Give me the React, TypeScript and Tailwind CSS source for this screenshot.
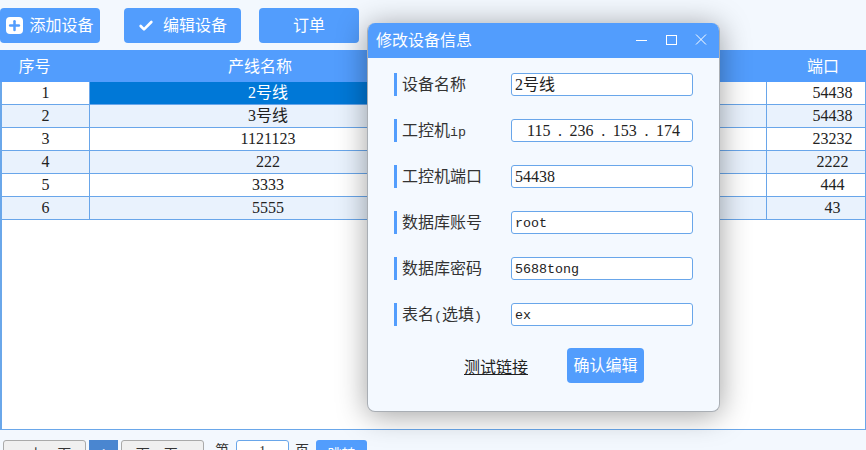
import type { ReactNode } from "react";
import { Check, Plus } from "lucide-react";

const rows = [
  { id: 1, name: "2号线", port: "54438" },
  { id: 2, name: "3号线", port: "54438" },
  { id: 3, name: "1121123", port: "23232" },
  { id: 4, name: "222", port: "2222" },
  { id: 5, name: "3333", port: "444" },
  { id: 6, name: "5555", port: "43" },
];

const mono = "font-['Liberation_Mono','Noto_Sans_CJK_SC',monospace] text-[13.33px]";
const monoValue = "translate-y-px font-['Liberation_Mono','Noto_Sans_CJK_SC',monospace] text-[13.33px]";

const fields: { label: ReactNode; value: ReactNode }[] = [
  { label: "设备名称", value: "2号线" },
  { label: <>工控机<span className={mono}>ip</span></>, value: "ip" },
  { label: "工控机端口", value: "54438" },
  { label: "数据库账号", value: <span className={monoValue}>root</span> },
  { label: "数据库密码", value: <span className={monoValue}>5688tong</span> },
  { label: <>表名<span className={mono}>(</span>选填<span className={mono}>)</span></>, value: <span className={monoValue}>ex</span> },
];

function Toolbar() {
  return (
    <div className="flex h-[50px] items-start pt-2 text-white">
      <button className="flex h-[35px] w-[100px] items-center justify-center gap-[6px] rounded-[4px] bg-[#529dfd]">
        <span className="flex h-[17px] w-[17px] items-center justify-center rounded-[4px] bg-white">
          <Plus size={15} strokeWidth={4} className="text-[#529dfd]" />
        </span>
        添加设备
      </button>
      <button className="ml-6 flex h-[35px] w-[117px] items-center justify-center gap-[9px] rounded-[4px] bg-[#529dfd]">
        <Check size={16} strokeWidth={4} />
        编辑设备
      </button>
      <button className="ml-[18px] h-[35px] w-[100px] rounded-[4px] bg-[#529dfd]">订单</button>
    </div>
  );
}

function DataTable() {
  return (
    <div className="flex h-[380px] flex-col border-b border-l-2 border-r border-[#6aa7ea] bg-white">
      <div className="-ml-[2px] -mr-px flex h-8 shrink-0 items-center bg-[#529dfd] pt-[2px] text-white">
        <div className="w-[69px] text-center">序号</div>
        <div className="w-[382px] text-center">产线名称</div>
        <div className="flex-1" />
        <div className="w-[86px] text-center">端口</div>
      </div>
      {rows.map((r, i) => (
        <div
          key={r.id}
          className={`flex h-[23px] shrink-0 items-center border-b border-[#69a6ea] text-[#222] ${i % 2 ? "bg-[#e9f2fd]" : "bg-white"}`}
        >
          <div className="flex h-full w-[88px] items-center justify-center border-r border-[#69a6ea]">{r.id}</div>
          <div
            className={`flex h-full w-[356px] items-center justify-center ${i === 0 ? "bg-[#0078d7] text-white" : ""}`}
          >
            {r.name}
          </div>
          <div className="h-full flex-1 border-r border-[#69a6ea]" />
          <div className="flex h-full w-[98px] items-center justify-center pl-[33px]">{r.port}</div>
        </div>
      ))}
    </div>
  );
}

function Pagination() {
  return (
    <div className="flex h-5 items-start pl-[3px] pt-[10px] text-[14px] text-[#333]">
      <button className="h-7 w-[83px] rounded-[3px] border border-[#aaa] bg-[#f0f0f0]">&lt; 上一页</button>
      <button className="ml-[3px] h-7 w-[29px] bg-[#4a86d0] text-white">1</button>
      <button className="ml-[3px] h-7 w-[83px] rounded-[3px] border border-[#aaa] bg-[#f0f0f0]">下一页 &gt;</button>
      <span className="ml-[11px]">第</span>
      <div className="ml-[7px] flex h-7 w-[53px] justify-center rounded-[3px] border border-[#69a6ea] bg-white">1</div>
      <span className="ml-[6px]">页</span>
      <button className="ml-[7px] h-7 w-[51px] rounded-[3px] bg-[#529dfd] text-white">跳转</button>
    </div>
  );
}

function Dialog() {
  return (
    <div className="absolute left-[367px] top-[23px] flex h-[389px] w-[353px] flex-col overflow-hidden rounded-[8px] border-x border-b border-[#a9aeb4] bg-[#f4f9ff] shadow-[0_3px_30px_rgba(0,0,0,0.38)]">
      <div className="-mx-px flex h-[35px] shrink-0 items-center bg-[#529dfd] pl-[9px] text-white">
        <span className="flex-1">修改设备信息</span>
        <svg width="76" height="14" viewBox="0 0 76 14" fill="none" stroke="white" strokeWidth="1" className="mr-2 -translate-y-px">
          <path d="M0 7.5H11" />
          <rect x="30.5" y="2.5" width="10" height="9" />
          <path d="M60 1.5L70 11.5M70 1.5L60 11.5" />
        </svg>
      </div>
      <div className="flex flex-col gap-[23px] pl-[26px] pt-[15px]">
        {fields.map((f, i) => (
          <div key={i} className="flex h-[23px] items-center">
            <div className="flex h-full w-[117px] items-center border-l-[3px] border-[#529dfd] pl-[5px] pt-px text-[#333]">
              <span>{f.label}</span>
            </div>
            <div className="flex h-full w-[182px] items-center rounded-[3px] border border-[#69a6ea] bg-white pl-[3px] text-[#222]">
              {f.value === "ip" ? (
                <div className="flex w-full justify-between pl-[12px] pr-[12px]">
                  <span>115</span><span>.</span><span>236</span><span>.</span><span>153</span><span>.</span><span>174</span>
                </div>
              ) : (
                f.value
              )}
            </div>
          </div>
        ))}
      </div>
      <div className="mt-[22px] flex items-start pl-[96px]">
        <span className="mt-[8px] text-[#222] underline">测试链接</span>
        <button className="ml-[39px] h-[35px] w-[77px] rounded-[4px] bg-[#529dfd] text-white">确认编辑</button>
      </div>
    </div>
  );
}

export default function App() {
  return (
    <div className="relative h-[450px] w-[866px] overflow-hidden bg-[#f3f8fe] font-['Liberation_Serif','Noto_Sans_CJK_SC',serif] text-[16px]">
      <Toolbar />
      <DataTable />
      <Pagination />
      <Dialog />
    </div>
  );
}
